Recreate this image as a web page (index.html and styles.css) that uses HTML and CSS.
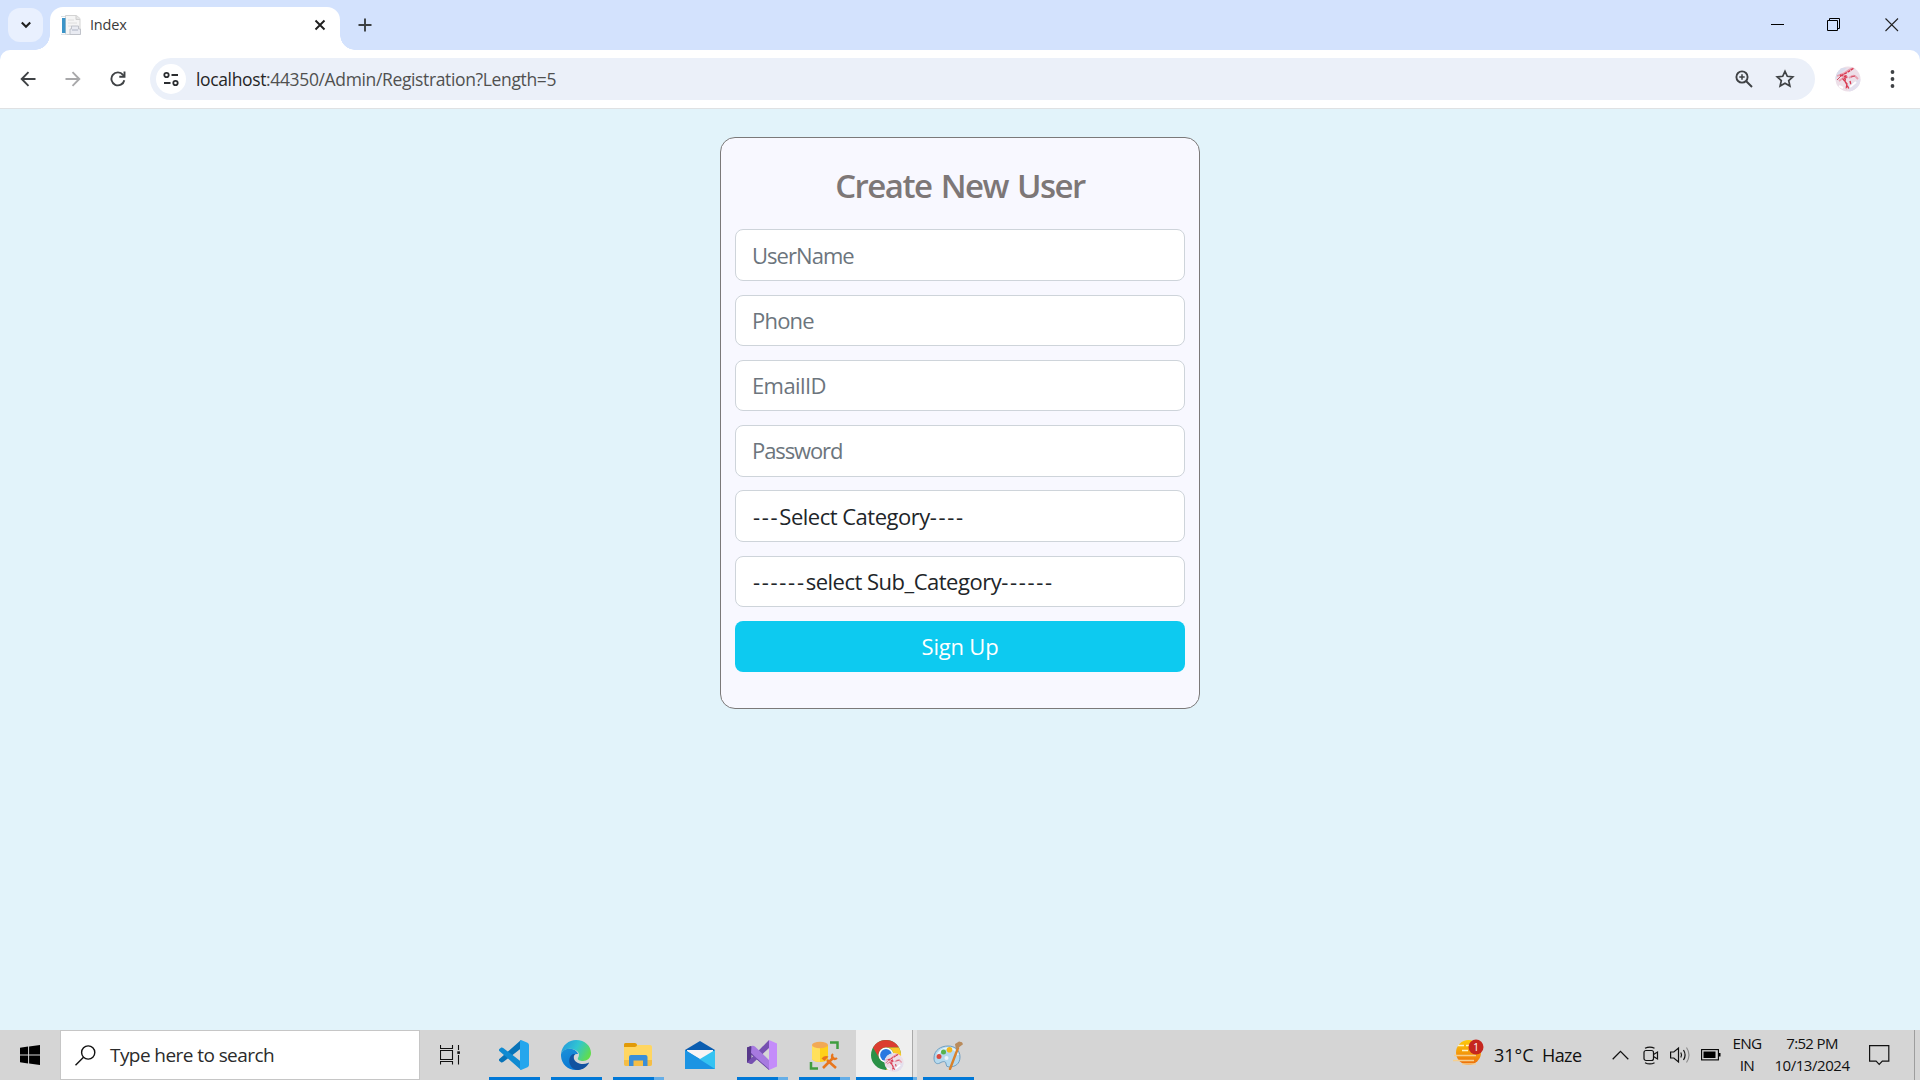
FILE: index.html
```html
<!DOCTYPE html>
<html lang="en">
<head>
<meta charset="utf-8">
<title>Index</title>
<link rel="stylesheet" href="styles.css">
</head>
<body>
<svg class="defs" width="0" height="0" aria-hidden="true">
  <defs>
    <clipPath id="round"><circle cx="13" cy="13" r="12.5"/></clipPath>
    <symbol id="avatar" viewBox="0 0 26 26">
      <g clip-path="url(#round)">
        <rect width="26" height="26" fill="#eddfe8"/>
        <path d="M0 2h12L5 8 0 14z" fill="#d9dcec"/>
        <path d="M13 18l13-5v13H14z" fill="#e3e0ee"/>
        <path d="M2 10q7-2 9-4 6-4 8-4M4 15l4-3 5-1M14 12q4-3 6-2l3 3" stroke="#e8a0b0" stroke-width="1.8" fill="none"/>
        <path d="M6 10l5-3 2-1 6-4M5 9l7 2-4 2 4 5-1 5M11 9l-1 6 4 8M15 15l1 4" stroke="#d93b52" stroke-width="1.4" fill="none" stroke-dasharray="3 .8"/>
        <path d="M2 14l4-4M16 11l4-1" stroke="#d34b60" stroke-width="1"/>
        <path d="M15 21l6-5M4 20l4 2" stroke="#fff" stroke-width="2"/>
      </g>
    </symbol>
  </defs>
</svg>

<header class="tabstrip">
  <button class="tab-search" aria-label="Search tabs"><svg width="12" height="8" viewBox="0 0 12 8"><path d="M1.8 1.5L6 5.7l4.2-4.2" fill="none" stroke="#1f1f1f" stroke-width="2.1"/></svg></button>
  <div class="tab">
    <svg class="favicon" width="20" height="20" viewBox="0 0 20 20">
      <path d="M4.5.5h11l3.5 3v16H4.500z" fill="#f5f5f5" stroke="#d3d3d3"/>
      <path d="M15 .5v4h4" fill="#e4e4e4" stroke="#cfcfcf"/>
      <path d="M7 5h6M7 8h9M7 11h4" stroke="#dedede"/>
      <rect x="1" y="3" width="3.500" height="15" fill="#3b94c8"/>
      <path d="M0 1.500h4M0 19.300h6" stroke="#d8dfe4"/>
      <path d="M10.500 11h7v3h2v5.500H9v-5.500h1.500z" fill="#e9ebf2" stroke="#c0c3ca"/>
      <path d="M11 15h6" stroke="#aeb4c4"/>
    </svg>
    <span class="tab-title">Index</span>
    <svg class="tab-close" width="12" height="12" viewBox="0 0 12 12"><path d="M1.500 1.500l9 9m0-9l-9 9" stroke="#1f1f1f" stroke-width="1.900"/></svg>
  </div>
  <svg class="new-tab" width="14" height="14" viewBox="0 0 14 14"><path d="M7 .5v13M.5 7h13" stroke="#3c4043" stroke-width="1.900"/></svg>
  <div class="window-buttons">
    <svg width="14" height="14" viewBox="0 0 14 14"><path d="M1 6.500h13" stroke="#000"/></svg>
    <svg width="14" height="14" viewBox="0 0 14 14"><path d="M.5 2.500h10v10H.5zM2.500 2.500v-2h10v10h-2" fill="none" stroke="#000"/></svg>
    <svg width="14" height="14" viewBox="0 0 14 14"><path d="M.5 .5l12.500 12.500M13 .5L.5 13" stroke="#222" stroke-width="1.100"/></svg>
  </div>
</header>

<nav class="toolbar">
  <svg class="nav-icon" width="16" height="16" viewBox="0 0 16 16"><path d="M15.500 8H2M8.500 1.200L1.700 8l6.800 6.800" fill="none" stroke="#3f4245" stroke-width="1.900"/></svg>
  <svg class="nav-icon" width="16" height="16" viewBox="0 0 16 16"><path d="M.5 8H14M7.500 1.200L14.300 8l-6.800 6.800" fill="none" stroke="#a8a8aa" stroke-width="1.900"/></svg>
  <svg class="nav-icon" width="16" height="16" viewBox="0 0 16 16"><path d="M14.300 9.200A6.500 6.500 0 1 1 13 3.800l1.300 1.500" fill="none" stroke="#3f4245" stroke-width="1.900"/><path d="M14.500 .5v5.200H9.300" fill="none" stroke="#3f4245" stroke-width="1.900"/></svg>
  <div class="omnibox">
    <span class="site-info"><svg width="16" height="16" viewBox="0 0 16 16" fill="none" stroke="#2b2d30" stroke-width="1.800"><circle cx="3.500" cy="4" r="2.200"/><path d="M8.500 4H15M1 12h6.500"/><circle cx="12.500" cy="12" r="2.200"/></svg></span>
    <span class="url"><span class="host">localhost</span>:44350/Admin/Registration?Length=5</span>
    <svg class="zoom" width="18" height="18" viewBox="0 0 18 18" fill="none" stroke="#3f4245" stroke-width="1.900"><circle cx="7" cy="7" r="5.600"/><path d="M11 11l6 6"/><path d="M7 4.300v5.400M4.300 7h5.400" stroke-width="1.500"/></svg>
    <svg class="star" width="20" height="20" viewBox="0 0 20 20"><path d="M10 2.300l2.300 5 5.500.6-4.100 3.700 1.200 5.500-4.900-2.800-4.900 2.800 1.200-5.500-4.100-3.700 5.500-.6z" fill="none" stroke="#3f4245" stroke-width="1.700"/></svg>
  </div>
  <svg class="avatar" width="26" height="26"><use href="#avatar"/></svg>
  <svg class="menu" width="5" height="18" viewBox="0 0 5 18" fill="#3f4245"><circle cx="2.500" cy="2" r="1.900"/><circle cx="2.500" cy="9" r="1.900"/><circle cx="2.500" cy="16" r="1.900"/></svg>
</nav>

<main class="page">
  <form class="card">
    <h1>Create New User</h1>
    <input class="field username" type="text" placeholder="UserName">
    <input class="field phone" type="text" placeholder="Phone">
    <input class="field email" type="text" placeholder="EmailID">
    <input class="field password" type="password" placeholder="Password">
    <div class="field select category" role="combobox" tabindex="0"><span class="dashes">---</span>Select Category<span class="dashes">----</span></div>
    <div class="field select" role="combobox" tabindex="0"><span class="dashes">------</span>select Sub_Category<span class="dashes">------</span></div>
    <button class="submit" type="button">Sign Up</button>
  </form>
</main>

<footer class="taskbar">
  <div class="start"><svg width="20" height="20" viewBox="0 0 20 20"><path d="M0 2.800L8.100 1.600V9.500H0zM9.100 1.500L20 0v9.500H9.100zM0 10.500h8.100v7.900L0 17.200zM9.100 10.500H20V20L9.100 18.500z"/></svg></div>
  <div class="search">
    <svg width="21" height="21" viewBox="0 0 21 21" fill="none" stroke="#111" stroke-width="1.400"><circle cx="13.200" cy="7.500" r="6.600"/><path d="M8.500 12.200L.5 20.200"/></svg>
    <span>Type here to search</span>
  </div>
  <div class="task-view"><svg width="20" height="20" viewBox="0 0 20 20" fill="none" stroke="#111" stroke-width="1.100"><path d="M.5 0v3.500h12V0M.5 5.500h12v9H.5zM.5 19.500v-3h12v3M18.500 0v5M18.500 10v9.500"/><rect x="17.300" y="6.300" width="2.600" height="2.600" fill="#111" stroke="none"/></svg></div>

  <div class="app">
    <svg width="30" height="30" viewBox="0 0 30 30">
      <path d="M22 0L0 19.300q-.5 1.200.7 2l1.600 1.200q1 .3 1.900-.4L22.500 8z" fill="#0873b8"/>
      <path d="M22 30L0 10.700q-.5-1.200.7-2l1.600-1.200q1-.3 1.900.4L22.500 22z" fill="#108bd2"/>
      <path d="M22 0l6.500 2.800Q30 3.600 30 5v20q0 1.400-1.500 2.200L22 30l-1-1.300V1.300z" fill="#25a6ed"/>
    </svg>
  </div>
  <div class="app">
    <svg width="30" height="30" viewBox="0 0 30 30">
      <defs>
        <linearGradient id="edgeTop" x1="0" x2="1" y1=".2" y2=".6"><stop offset="0" stop-color="#2699dd"/><stop offset=".5" stop-color="#30c5d2"/><stop offset="1" stop-color="#61dd4b"/></linearGradient>
        <linearGradient id="edgeLeft" x2=".5" y2="1"><stop stop-color="#1c91d9"/><stop offset="1" stop-color="#0876d3"/></linearGradient>
      </defs>
      <path d="M0 14C1 5 8 0 15 0c9 0 15 6 15 13 0 5-4 8-8 8-3 0-6-1-5-3 3-5-1-8-6-9C6 8 2 10 0 14z" fill="url(#edgeTop)"/>
      <path d="M0 14C2 9 7 8 11 9c4 1 6 4 6 5-5-1-6 5-3 9 3 4 7 5 10 4-3 2-6 3-9 3C6 30-.5 23 0 14z" fill="url(#edgeLeft)"/>
      <path d="M12 14c-6 3-5 14 4 16 5 .3 10-3 12-7q-.3-.8-1 0c-5 2-12 1-14-4-.7-2 0-4 1-5z" fill="#1252a0"/>
    </svg>
  </div>
  <div class="app grouped">
    <svg width="28" height="24" viewBox="0 0 28 24">
      <path d="M0 1.500Q0 0 1.500 0H11l2.500 2H26q2 0 2 2v17q0 2-2 2H2q-2 0-2-2z" fill="#ffd661"/>
      <path d="M0 1.500Q0 0 1.500 0H11q2 .3 2 2t-2 2H0z" fill="#e19a08"/>
      <path d="M0 17h28v4q0 2-2 2H2q-2 0-2-2z" fill="#f5bd45"/>
      <path d="M5 23V14q0-2 2-2h14.500q2 0 2 2v9H19v-5.500H9.500V23z" fill="#3a8ed8"/>
    </svg>
  </div>
  <div class="app idle">
    <svg width="30" height="28" viewBox="0 0 30 28">
      <path d="M0 9L15 0l15 9v4H0z" fill="#0a5db0"/>
      <path d="M2 9h26v7l-13 4L2 15z" fill="#f7f4f5"/>
      <path d="M0 9l15 9-9 10H0z" fill="#1490df"/>
      <path d="M30 9v19H0l15-10z" fill="#35c3f2"/>
      <path d="M0 28V9l30 19z" fill="#1b94e3"/>
    </svg>
  </div>
  <div class="app grouped">
    <svg width="30" height="30" viewBox="0 0 30 30">
      <path d="M0 7.500L4 6l18 18v6L4 14.500V16L0 21z" fill="#6845a3"/>
      <path d="M0 7.500L4.500 6v18L0 22.500z" fill="#57388a"/>
      <path d="M0 22.500L22 0v8L5 24z" fill="#7650b1"/>
      <path d="M4.500 6q2-.7 4 1L23 21v9L4 13z" fill="#a77ae0"/>
      <path d="M22 0l8 3.500v23L22 30z" fill="#c48cfa"/>
    </svg>
  </div>
  <div class="app grouped">
    <svg width="30" height="29" viewBox="0 0 30 29">
      <path d="M3 4v14q2 3 8 3 6 0 8-3V4z" fill="#ffd11a"/>
      <path d="M3 4v14q2 3 8 3V4z" fill="#ffe05c"/>
      <ellipse cx="11" cy="4" rx="8" ry="3.200" fill="#f2a955"/>
      <path d="M21 1.500h7.500V8M2 21v6.500h7" fill="none" stroke="#3f9d3f" stroke-width="2.500"/>
      <path d="M14 27l11-11M18 19l9 8" stroke="#e8761d" stroke-width="2.600"/>
      <path d="M12.500 17.500q3-3.500 7-2l-4 4.500z" fill="#e8761d"/>
      <path d="M24 13q-2 2-.5 4.500 2.500 1.500 4.500-.5" fill="none" stroke="#e8761d" stroke-width="2"/>
    </svg>
  </div>
  <div class="app active">
    <svg width="34" height="34" viewBox="0 0 34 34">
      <circle cx="16" cy="16" r="15" fill="#2a9147"/>
      <path d="M3 8.500A15 15 0 0 1 29 8.500H16a7.500 7.500 0 0 0-6.500 11.300z" fill="#db3d30"/>
      <path d="M29 8.500A15 15 0 0 1 16 31l6.500-11.200A7.500 7.500 0 0 0 16 8.500z" fill="#fbc928"/>
      <circle cx="16" cy="16" r="7.500" fill="#fff"/><circle cx="16" cy="16" r="5.900" fill="#2878e0"/>
      <use href="#avatar" x="14" y="13.500" width="20" height="20"/>
    </svg>
  </div>
  <div class="app">
    <svg width="31" height="30" viewBox="0 0 31 30">
      <path d="M1 18C1 10 8 6 15 6s12 4 12 11-5 10-11 10q-3 0-3-3c0-3-3-3-6-1-4 2-6-1-6-5z" fill="#b5d9ee" stroke="#6f9fc2"/>
      <path d="M4 17Q6 9 15 8q8 0 10 7" fill="none" stroke="#e3f3fb" stroke-width="2"/>
      <circle cx="6" cy="16.500" r="2.500" fill="#d94a40"/><circle cx="10.500" cy="12" r="2.500" fill="#55b34d"/><circle cx="16.500" cy="9.700" r="2.800" fill="#f4b81c"/><circle cx="13.500" cy="18" r="2" fill="#eef4f8"/>
      <path d="M17 29l8-21" stroke="#d9822b" stroke-width="2.400" stroke-linecap="round"/>
      <path d="M23 10l-1-6 4-2.500 3 .8 1 2-4 3z" fill="#b98b5c"/>
    </svg>
  </div>

  <div class="tray">
    <div class="weather">
      <svg width="31" height="28" viewBox="0 0 31 28">
        <defs><linearGradient id="haze" x2="0" y2="1"><stop stop-color="#fdcb0a"/><stop offset="1" stop-color="#eb6c0d"/></linearGradient></defs>
        <circle cx="15.500" cy="13.500" r="12.500" fill="url(#haze)"/>
        <path d="M5 6.500h6M13 6.500h4M9 11.500h6" stroke="#fff2c4" stroke-width="1.700"/>
        <path d="M1 16.500h22M0 21.500h21M9 25h14" stroke="#f6cf8e" stroke-width="1.500"/>
        <circle cx="23" cy="8" r="7.500" fill="#c5271f"/>
        <text class="badge" x="23" y="12" text-anchor="middle">1</text>
      </svg>
      <span class="temp">31°C</span><span class="haze">Haze</span>
    </div>
    <svg class="chevron" width="17" height="10" viewBox="0 0 17 10"><path d="M.7 9.200L8.500 1.400l7.800 7.800" fill="none" stroke="#111" stroke-width="1.300"/></svg>
    <svg class="meet" width="16" height="19" viewBox="0 0 16 19" fill="none" stroke="#111" stroke-width="1.200"><rect x="1" y="4.500" width="9.500" height="10" rx="2"/><path d="M10.500 8.500l4-2.500v7l-4-2.500M2 2.300q5-2.500 9.500 0M2 16.700q5 2.500 9.500 0"/></svg>
    <svg class="volume" width="21" height="18" viewBox="0 0 21 18" fill="none" stroke="#111" stroke-width="1.200"><path d="M.6 6v6h3.200l4.700 4V2L3.800 6zM10.800 6.500q1.500 2.500 0 5M13.500 4q3.200 5 0 10"/><path d="M16.500 1.500q5 7.500 0 15" stroke="#8d8d8d"/></svg>
    <svg class="battery" width="20" height="12" viewBox="0 0 20 12"><rect x=".6" y=".6" width="16.800" height="10.300" fill="none" stroke="#000" stroke-width="1.100"/><rect x="2.500" y="2.500" width="12" height="6.500"/><rect x="18" y="4" width="1.500" height="3.500"/></svg>
    <div class="lang"><span>ENG</span><span>IN</span></div>
    <div class="clock"><span class="time">7:52 PM</span><span class="date">10/13/2024</span></div>
    <svg class="notify" width="21" height="21" viewBox="0 0 21 21"><path d="M.6.600h19.200v15.500h-6.500l-3.100 3.200-3.100-3.200H.6z" fill="none" stroke="#111" stroke-width="1.200"/></svg>
    <span class="peek"></span>
  </div>
</footer>
</body>
</html>
```
FILE: styles.css
```css
* { box-sizing: border-box; }
body {
  margin: 0;
  width: 1920px;
  height: 1080px;
  overflow: hidden;
  display: grid;
  grid-template-rows: 50px 59px 921px 50px;
  font-family: "Open Sans", "Noto Sans", sans-serif;
  background: #d3e2fd;
}
svg { display: block; flex: none; }
button { font: inherit; border: 0; padding: 0; }
.defs { position: absolute; }

/* Tab strip */
.tabstrip { display: flex; align-items: flex-start; padding-left: 8px; background: #d3e2fd; }
.tab-search {
  width: 35px;
  height: 34px;
  margin-top: 8px;
  border-radius: 12px;
  background: #e9f0fe;
  display: flex;
  align-items: center;
  justify-content: center;
}
.tab {
  position: relative;
  width: 290px;
  height: 43px;
  margin: 7px 0 0 7px;
  padding: 0 14px 7px 11px;
  border-radius: 13px 13px 0 0;
  background: #fff;
  display: flex;
  align-items: center;
}
.tab::before, .tab::after {
  content: "";
  position: absolute;
  bottom: 0;
  width: 15px;
  height: 15px;
}
.tab::before { left: -15px; background: radial-gradient(circle at 0 0, transparent 14.5px, #fff 15px); }
.tab::after { right: -15px; background: radial-gradient(circle at 100% 0, transparent 14.5px, #fff 15px); }
.tab-title { margin-left: 9px; font-size: 14.5px; letter-spacing: -.2px; color: #3a3a3a; flex: 1; padding-bottom: 1px; }
.new-tab { margin: 18px 0 0 18px; }
.window-buttons { display: flex; gap: 43px; margin: 17.5px 21px 0 auto; }
.window-buttons svg { margin-top: .5px; }
.window-buttons svg:last-child { margin-left: 1px; }

/* Toolbar */
.toolbar {
  display: flex;
  align-items: center;
  padding: 0 25px 0 20px;
  background: #fff;
  border-bottom: 1px solid #dfe1e3;
  border-radius: 10px 10px 0 0;
}
.nav-icon { margin-right: 29px; }
.omnibox {
  width: 1665px;
  height: 42px;
  margin-left: -5px;
  padding: 0 20px 0 6px;
  border-radius: 21px;
  background: #ebf0f9;
  display: flex;
  align-items: center;
}
.site-info {
  width: 30px;
  height: 30px;
  border-radius: 50%;
  background: #fff;
  display: flex;
  align-items: center;
  justify-content: center;
}
.url { flex: 1; margin-left: 10px; font-size: 17.5px; letter-spacing: -.36px; color: #505050; }
.host { color: #262626; }
.star { margin-left: 22px; }
.avatar { margin-left: 20px; }
.menu { margin-left: 29px; }

/* Registration form */
.page { background: #e2f3fa; display: flex; justify-content: center; align-items: flex-start; padding-top: 28px; }
.card {
  width: 480px;
  height: 572px;
  padding: 28px 14px 0;
  border: 1px solid #7b7979;
  border-radius: 15px;
  background: #f8f8ff;
}
h1 {
  margin: 0 0 23.220px;
  font-size: 33px;
  line-height: 40px;
  font-weight: 600;
  letter-spacing: -1.5px;
  word-spacing: 2px;
  text-align: center;
  color: #7d7777;
}
.field {
  display: block;
  width: 100%;
  height: 51.600px;
  margin: 0 0 13.700px;
  padding: 0 16px;
  border: 1px solid #ced4da;
  border-radius: 8px;
  background: #fff;
  font: 22px/49px "Open Sans", "Noto Sans", sans-serif;
  color: #212529;
}
.field::placeholder { color: #6c757d; opacity: 1; }
.username { letter-spacing: -.95px; }
.phone { letter-spacing: -.8px; }
.email { letter-spacing: -.6px; padding-bottom: 1px; }
.password { letter-spacing: -1.100px; padding-bottom: 1px; }
.select { padding-left: 17px; letter-spacing: -.5px; white-space: nowrap; }
.category { line-height: 51px; }
.dashes { letter-spacing: 1.700px; }
.submit {
  display: block;
  width: 100%;
  height: 51.300px;
  padding-bottom: 1px;
  border-radius: 8px;
  background: #0dcaf0;
  color: #fff;
  font-size: 22px;
  letter-spacing: -.2px;
}

/* Taskbar */
.taskbar { display: flex; background: #d5d5d5; color: #111; }
.start { width: 60px; display: flex; align-items: center; justify-content: center; }
.search {
  width: 360px;
  padding-left: 14px;
  background: #fff;
  border: 1px solid #c6c6c6;
  display: flex;
  align-items: center;
  gap: 14px;
  font-size: 19px;
  letter-spacing: -.57px;
  color: #2b2b2b;
}
.task-view { width: 63px; padding-left: 20px; display: flex; align-items: center; }
.app {
  width: 62px;
  height: 50px;
  padding: 0 5px 0 5px;
  display: flex;
  align-items: center;
  justify-content: center;
  background: linear-gradient(#0078d7, #0078d7) 6px 47px / 51px 3px no-repeat;
}
.app.grouped {
  background:
    linear-gradient(#0078d7, #0078d7) 6px 47px / 41px 3px no-repeat,
    linear-gradient(#66aee7, #66aee7) 47px 47px / 10px 3px no-repeat;
}
.app.idle { background: none; }
.app.active {
  padding: 2px 4px 0 6px;
  background:
    linear-gradient(#0078d7, #0078d7) 1px 47px / 57px 3px no-repeat,
    linear-gradient(#66aee7, #66aee7) 58px 47px / 4px 3px no-repeat,
    linear-gradient(90deg, #d5d5d5 1px, #efefef 1px 57px, #a9a9a9 57px 58px, #e3e3e3 58px);
}
.tray { margin-left: auto; display: flex; align-items: center; }
.weather { display: flex; align-items: center; font-size: 18px; }
.weather svg { margin-top: -5px; }
.badge { font-size: 10px; fill: #fff; }
.temp { margin-left: 10px; width: 48px; }
.haze { width: 39px; letter-spacing: -.6px; }
.chevron { margin-left: 31px; }
.meet { margin-left: 14px; }
.volume { margin-left: 11px; }
.battery { margin-left: 10px; }
.lang, .clock { display: flex; flex-direction: column; align-items: center; font-size: 15.300px; line-height: 22px; padding-bottom: 2px; }
.lang { margin-left: 11px; width: 30px; letter-spacing: -.7px; }
.clock { margin-left: 12px; width: 76px; font-size: 15px; line-height: 22.500px; }
.time { letter-spacing: -.65px; }
.date { letter-spacing: -.45px; }
.notify { margin-left: 19px; }
.peek { width: 6px; height: 50px; margin-left: 24px; border-left: 1px solid #9d9d9d; }
```
